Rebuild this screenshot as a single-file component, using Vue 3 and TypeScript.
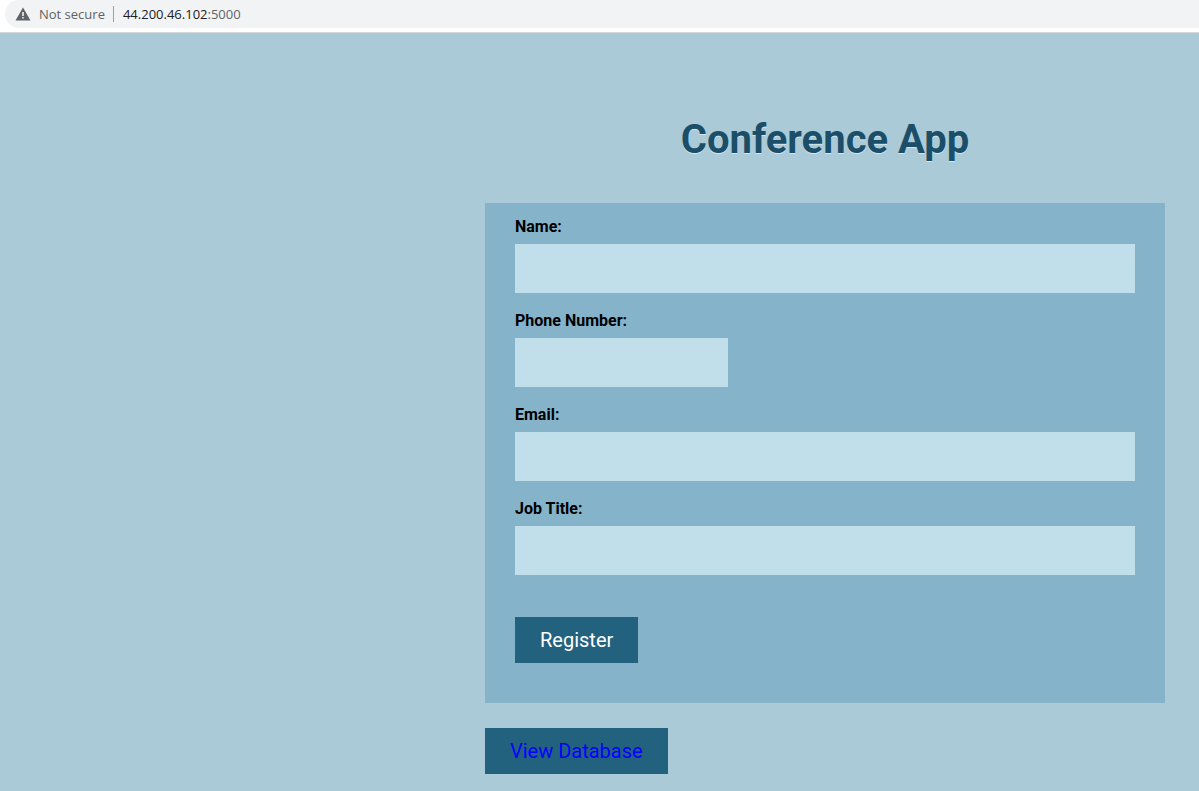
<script setup lang="ts">
import { reactive } from 'vue'

interface Field {
  id: 'name' | 'phone' | 'email' | 'job'
  label: string
  type: string
}

const fields: Field[] = [
  { id: 'name', label: 'Name:', type: 'text' },
  { id: 'phone', label: 'Phone Number:', type: 'tel' },
  { id: 'email', label: 'Email:', type: 'email' },
  { id: 'job', label: 'Job Title:', type: 'text' },
]

const form = reactive({ name: '', phone: '', email: '', job: '' })
</script>

<template>
  <div class="browser">
    <header class="toolbar">
      <div class="address">
        <svg class="warning" viewBox="0 0 16 14" aria-hidden="true">
          <path fill="#5f6368" d="M8 0.5 15.5 13.5H0.5Z" />
          <path fill="#f1f3f4" d="M7.2 5h1.6v4H7.2zM7.2 10h1.6v1.6H7.2z" />
        </svg>
        <span class="status">Not secure</span>
        <span class="divider"></span>
        <span class="url">44.200.46.102<span class="port">:5000</span></span>
      </div>
    </header>
    <main class="page">
      <div class="content">
        <h1>Conference App</h1>
        <form class="card" @submit.prevent>
          <div v-for="field in fields" :key="field.id" class="field">
            <label :for="field.id">{{ field.label }}</label>
            <input
              :id="field.id"
              v-model="form[field.id]"
              :type="field.type"
              :class="{ short: field.id === 'phone' }"
            />
          </div>
          <button class="register" type="submit">Register</button>
        </form>
        <a class="view" href="#database">View Database</a>
      </div>
    </main>
  </div>
</template>

<style>
body {
  background: #abcad7;
}
</style>

<style scoped>
.browser {
  display: flex;
  flex-direction: column;
  min-height: 100vh;
  font-family: Roboto, sans-serif;
}
.toolbar {
  padding: 0 0 4px 5px;
  background: #fff;
  border-bottom: 1px solid #d6d8d9;
}
.address {
  display: flex;
  align-items: center;
  height: 28px;
  padding-left: 10px;
  border-radius: 14px 0 0 14px;
  background: #f1f3f4;
  color: #5f6368;
  font: 13px/20px "Open Sans", sans-serif;
}
.warning {
  width: 16px;
  height: 14px;
  margin-right: 8px;
}
.divider {
  width: 1px;
  height: 16px;
  margin: 0 9px 0 8px;
  background: #9a9da1;
}
.url {
  color: #202124;
}
.port {
  color: #5f6368;
}
.page {
  flex: 1;
  box-sizing: border-box;
  padding: 80px 34px 17px;
  background: #abcad7;
}
.content {
  width: 100%;
  max-width: 680px;
  margin-left: auto;
}
h1 {
  margin: 0 0 36px;
  color: #1b4f69;
  font-size: 40px;
  font-weight: 700;
  line-height: 54px;
  text-align: center;
  text-shadow: 0 1px 0 #d5e7ee;
}
.card {
  padding: 14px 30px 40px;
  background: #85b3ca;
}
.field {
  margin-bottom: 18px;
}
label {
  display: block;
  margin-bottom: 8px;
  font-size: 16px;
  font-weight: 700;
  line-height: 19px;
}
input {
  display: block;
  box-sizing: border-box;
  width: 100%;
  height: 49px;
  padding: 12px;
  border: 0;
  border-radius: 0;
  background: #c1dfea;
  font: 20px/24px Roboto, sans-serif;
}
.short {
  width: 213px;
}
.register,
.view {
  box-sizing: border-box;
  height: 46px;
  padding: 0 25px;
  border: 0;
  background: #23627f;
  font: 20px/46px Roboto, sans-serif;
}
.register {
  display: block;
  margin-top: 42px;
  color: #fff;
}
.view {
  display: inline-block;
  margin-top: 25px;
  color: #00f;
  text-decoration: none;
}
</style>
